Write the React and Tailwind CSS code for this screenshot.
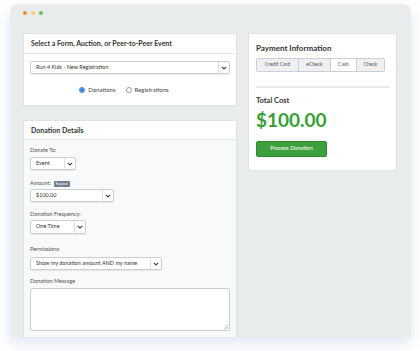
import React from "react";

const Chevron = () => (
  <svg width="6" height="4" viewBox="0 0 6 4" className="block">
    <path d="M0.8 0.8 L3 3 L5.2 0.8" fill="none" stroke="#444" strokeWidth="1.1" />
  </svg>
);

const Select = ({ value, width, tall }) => (
  <div
    className={`flex items-stretch bg-white border border-[#c9cfd4] rounded-[2px] shadow-[0_1px_1px_rgba(0,0,0,0.08)] ${width} ${
      tall ? "h-[14px]" : "h-[13px]"
    }`}
  >
    <div className="flex-1 flex items-center pl-[5px] text-[5.5px] text-[#333]">{value}</div>
    <div className="w-[11px] flex items-center justify-center border-l border-[#dde1e4]">
      <Chevron />
    </div>
  </div>
);

const Label = ({ children, className }) => (
  <div className={`text-[5.5px] text-[#555] leading-none ${className}`}>{children}</div>
);

const Radio = ({ checked, label }) => (
  <div className="flex items-center gap-[3px]">
    <div
      className={`w-[6px] h-[6px] rounded-full flex items-center justify-center border ${
        checked ? "border-[#3b82d6]" : "border-[#999]"
      } bg-white`}
    >
      {checked && <div className="w-[4px] h-[4px] rounded-full bg-[#2f7fd8]" />}
    </div>
    <span className="text-[6px] text-[#444]">{label}</span>
  </div>
);

export default function App() {
  return (
    <div className="w-[420px] h-[351px] bg-white font-['Lato',sans-serif] pt-[4px] pl-[10px]">
      <div className="w-[401px] h-[333px] bg-[#e9eced] rounded-t-[8px] overflow-hidden shadow-[0_6px_14px_rgba(90,110,190,0.18)]">
        {/* window dots */}
        <div className="flex gap-[4px] pl-[13px] pt-[7px] h-[29px]">
          <div className="w-[4px] h-[4px] rounded-full bg-[#f28a1e]" />
          <div className="w-[4px] h-[4px] rounded-full bg-[#f7cf6a]" />
          <div className="w-[4px] h-[4px] rounded-full bg-[#6cbf5a]" />
        </div>

        <div className="flex gap-[11px] pl-[13px]">
          {/* left column */}
          <div className="w-[214px] flex flex-col gap-[14px]">
            <div className="bg-white border border-[#dfe3e6]">
              <div className="h-[20px] flex items-center px-[7px] border-b border-[#e3e6e8] text-[7px] font-bold text-[#333]">
                Select a Form, Auction, or Peer-to-Peer Event
              </div>
              <div className="px-[6px] pt-[7px] pb-[11px]">
                <Select value="Run 4 Kids - New Registration" width="w-full" />
                <div className="flex justify-center gap-[10px] mt-[11px] pr-[12px]">
                  <Radio checked label="Donations" />
                  <Radio label="Registrations" />
                </div>
              </div>
            </div>

            <div className="bg-white border border-[#dfe3e6] h-[220px]">
              <div className="h-[19px] flex items-center px-[7px] border-b border-[#e3e6e8] text-[7px] font-bold text-[#333]">
                Donation Details
              </div>
              <div className="bg-[#f7f9fa] h-full px-[6px] pt-[8px]">
                <Label className="mb-[3.5px]">Donate To:</Label>
                <Select value="Event" width="w-[46px]" />
                <div className="mt-[11px] flex items-center gap-[3px] mb-[2px]">
                  <span className="text-[5.5px] text-[#555] leading-none">Amount:</span>
                  <span className="bg-[#6e7f92] text-white text-[3px] leading-none px-[2px] py-[1.5px] rounded-[1px]">
                    Required
                  </span>
                </div>
                <Select value="$100.00" width="w-[84px]" />
                <Label className="mt-[10px] mb-[2px]">Donation Frequency:</Label>
                <Select value="One Time" width="w-[56px]" tall />
                <Label className="mt-[13px] mb-[5px]">Permissions:</Label>
                <Select value="Show my donation amount AND my name" width="w-[132px]" />
                <Label className="mt-[9px] mb-[3px]">Donation Message</Label>
                <div className="w-full h-[43px] bg-white border border-[#c9cfd4] rounded-[2px] relative">
                  <svg width="4" height="4" viewBox="0 0 4 4" className="absolute right-[1px] bottom-[1px]">
                    <path d="M4 0 L0 4 M4 2 L2 4" stroke="#999" strokeWidth="0.6" />
                  </svg>
                </div>
              </div>
            </div>
          </div>

          {/* right column */}
          <div className="w-[149px] self-start bg-white border border-[#dfe3e6] px-[7px] pt-[10px] pb-[13px]">
            <div className="text-[8px] font-bold text-[#333] leading-none">Payment Information</div>
            <div className="flex mt-[6px] h-[14px] w-[129px] border border-[#c9cfd4] rounded-[2px] overflow-hidden text-[5px] text-[#555]">
              <div className="w-[42px] flex items-center justify-center bg-[#eef0f2] border-r border-[#c9cfd4]">Credit Card</div>
              <div className="w-[32px] flex items-center justify-center bg-[#eef0f2] border-r border-[#c9cfd4]">eCheck</div>
              <div className="w-[26px] flex items-center justify-center bg-white border-r border-[#c9cfd4]">Cash</div>
              <div className="flex-1 flex items-center justify-center bg-[#eef0f2]">Check</div>
            </div>
            <div className="h-[2px] bg-[#e6e9eb] mt-[14px]" />
            <div className="text-[7.5px] font-bold text-[#333] mt-[9px] leading-none">Total Cost</div>
            <div className="text-[19px] font-bold text-[#35a035] leading-none mt-[5px]">$100.00</div>
            <div className="mt-[12px] w-[71px] h-[16px] bg-[#3d9f3d] border border-[#2f8a2f] rounded-[2px] flex items-center justify-center text-[5.5px] text-white">
              Process Donation
            </div>
          </div>
        </div>
      </div>
    </div>
  );
}
